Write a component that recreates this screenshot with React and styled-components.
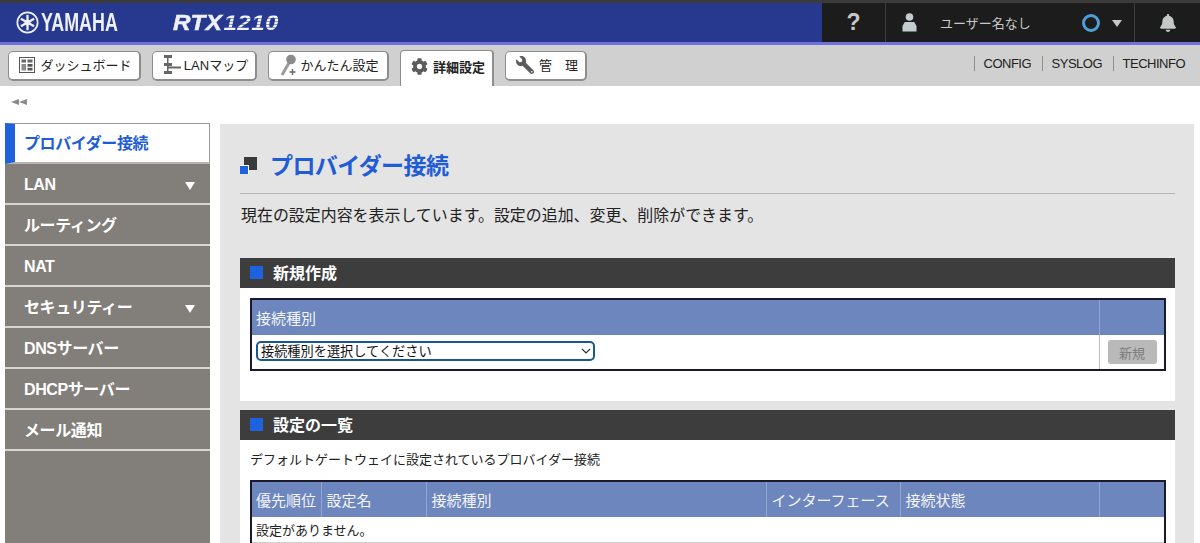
import React from 'react'
import styled, { createGlobalStyle } from 'styled-components'
import { FaBell, FaCog, FaWrench } from 'react-icons/fa'

const JP = `"Liberation Sans", "Noto Sans CJK JP", sans-serif`

const Global = createGlobalStyle`
html, body {
  margin: 0;
  padding: 0;
  height: 543px;
  overflow: hidden;
  background: #fff;
  font-family: ${JP};
  color: #1c1c1c;
}
`
const Page = styled.div`
width: 1200px;
height: 543px;
overflow: hidden;
display: flex;
flex-direction: column;
`
const TopBar = styled.header`
height: 39px;
flex: none;
display: flex;
justify-content: space-between;
background: #27398f;
border-top: 3px solid #3b3b3b;
border-bottom: 3px solid #7071dc;
`
const Brand = styled.div`
display: flex;
align-items: center;
padding-left: 16px;
color: #eef0f8;
`
const Yamaha = styled.span`
font-family: "Liberation Sans", sans-serif;
font-size: 25px;
font-weight: 700;
margin-left: 2px;
width: 78px;
display: inline-block;
transform: scaleX(.715);
transform-origin: left center;
`
const Model = styled.span`
font-family: "Liberation Sans", sans-serif;
font-size: 22px;
font-weight: 700;
font-style: italic;
margin-left: 54px;
letter-spacing: .4px;
display: inline-block;
transform: scaleX(1.1);
transform-origin: left center;
-webkit-text-stroke: .5px #eef0f8;
`
const ModelNum = styled.span`
margin-left: 1px;
-webkit-text-stroke: 0;
color: transparent;
background: repeating-linear-gradient(180deg, #f2f4fb 0 2px, #8f9bd2 2px 3px);
-webkit-background-clip: text;
background-clip: text;
`
const UserArea = styled.div`
width: 378px;
display: flex;
background: #1c1c1c;
color: #c6c8c8;
`
const HelpCell = styled.div`
width: 63px;
display: flex;
align-items: center;
justify-content: center;
border-right: 1px solid #3e3e3e;
font-size: 23px;
font-weight: 700;
`
const UserCell = styled.div`
width: 249px;
display: flex;
align-items: center;
padding-left: 16px;
box-sizing: border-box;
border-right: 1px solid #3e3e3e;
`
const UserName = styled.span`
font-size: 13px;
margin-left: 23px;
width: 142px;
`
const Status = styled.span`
width: 12px;
height: 12px;
border: 3px solid #4d9fd6;
border-radius: 50%;
`
const Caret = styled.span`
width: 0;
height: 0;
margin-left: ${p => p.$gap || 0}px;
margin-top: 2px;
border-left: 5px solid transparent;
border-right: 5px solid transparent;
border-top: ${p => p.$h || 7}px solid ${p => p.$color};
`
const BellCell = styled.div`
flex: 1;
display: flex;
align-items: center;
justify-content: center;
font-size: 18px;
`
const NavBar = styled.nav`
height: 41px;
flex: none;
display: flex;
justify-content: space-between;
background: #d0d0d0;
box-sizing: border-box;
padding: 5px 15px 0 8px;
`
const Tabs = styled.div`
display: flex;
align-items: flex-start;
gap: 11px;
`
const Tab = styled.div`
display: flex;
align-items: center;
justify-content: center;
gap: ${p => p.$gap || 5}px;
box-sizing: border-box;
width: ${p => p.$w}px;
height: ${p => (p.$active ? 36 : 30)}px;
margin: ${p => (p.$active ? '0' : '1px 0 0')};
padding: ${p => (p.$active ? '0 0 5px 3px' : '0 0 2px 3px')};
background: #fff;
border: 1px solid #8d8d8d;
border-right-width: 2px;
border-bottom: ${p => (p.$active ? '0' : '2px solid #8d8d8d')};
border-radius: ${p => (p.$active ? '4px 4px 0 0' : '5px')};
font-size: 13px;
font-weight: ${p => (p.$active ? 700 : 400)};
color: #222;
white-space: nowrap;
svg { flex: none; color: #5c5c5c; }
`
const FlipWrench = styled(FaWrench)`
transform: scaleX(-1);
`
const Links = styled.div`
display: flex;
align-items: flex-start;
padding-top: 6px;
font-size: 13px;
letter-spacing: -.5px;
color: #222;
`
const NavLink = styled.span`
line-height: 15px;
padding-left: 9px;
margin-left: ${p => (p.$first ? 0 : 10.5)}px;
border-left: 1px solid #8f8f8f;
`
const Body = styled.div`
flex: 1;
min-height: 0;
display: flex;
flex-direction: column;
`
const Collapse = styled.div`
height: 37px;
flex: none;
display: flex;
padding: 13px 0 0 11px;
box-sizing: border-box;
`
const CollapseArrow = styled.span`
width: 0;
height: 0;
border-top: 3.5px solid transparent;
border-bottom: 3.5px solid transparent;
border-right: 8px solid #8a8a8a;
`
const Columns = styled.div`
flex: 1;
display: flex;
align-items: stretch;
padding-left: 5px;
gap: 10px;
`
const Sidebar = styled.aside`
width: 205px;
flex: none;
height: 420px;
background: #827e7a;
`
const MenuActive = styled.div`
height: 41px;
box-sizing: border-box;
display: flex;
align-items: center;
padding: 2px 0 0 9px;
background: #fff;
border: 1px solid #9b9b9b;
border-left: 10px solid #1f62e0;
border-bottom: 2px solid #b8b5b0;
color: #1f5cd6;
font-size: 16px;
line-height: 20px;
letter-spacing: -.4px;
font-weight: 700;
`
const MenuItem = styled.div`
height: 41px;
box-sizing: border-box;
display: flex;
align-items: center;
justify-content: space-between;
padding: 2px 15px 0 19px;
border-bottom: 2px solid #d9d6d1;
color: #fff;
font-size: 16px;
line-height: 20px;
letter-spacing: -.4px;
font-weight: 700;
`
const Main = styled.main`
width: 974px;
flex: none;
margin-top: 1px;
background: #e4e4e4;
box-sizing: border-box;
padding: 0 19px 0 20px;
`
const Title = styled.div`
height: 70px;
box-sizing: border-box;
display: flex;
align-items: center;
padding: 12px 0 0;
border-bottom: 1px solid #b5b5b5;
`
const TitleText = styled.h1`
margin: 0 0 2px 12px;
font-size: 23px;
letter-spacing: -.6px;
font-weight: 700;
color: #1f5cd6;
`
const Lead = styled.p`
margin: 0;
height: 64px;
box-sizing: border-box;
padding: 11px 0 0 1px;
font-size: 15.95px;
line-height: 22px;
color: #222;
`
const SectionHead = styled.h2`
margin: 0;
height: 30px;
box-sizing: border-box;
display: flex;
align-items: center;
padding: 0 0 2px 10px;
gap: 10px;
background: #3d3d3d;
color: #fff;
font-size: 16px;
font-weight: 700;
`
const BlueSquare = styled.span`
width: 13px;
height: 13px;
background: #1f62e0;
`
const Panel = styled.section`
background: #fff;
padding: 10px 10px 30px;
margin-bottom: 9px;
`
const Note = styled.p`
margin: 0;
height: 30px;
line-height: 20px;
font-size: 13px;
color: #222;
`
const Table = styled.table`
width: 914px;
table-layout: fixed;
border-collapse: collapse;
border: 2px solid #1a1a2c;
font-size: 13px;
`
const Th = styled.th`
height: 35px;
padding: 0 0 0 5px;
background: #6d86bd;
border-left: 1px solid #93a6d2;
color: #f3f5fa;
font-size: 15px;
font-weight: 400;
text-align: left;
white-space: nowrap;
&:first-child { border-left: 0; padding-left: 4px; }
`
const Td = styled.td`
height: ${p => p.$h || 34}px;
padding: 0 0 0 4px;
color: #222;
border-left: ${p => (p.$split ? '1px solid #bdbdbd' : '0')};
border-bottom: 1px solid #cfcfcf;
`
const SelectWrap = styled.div`
position: relative;
width: 339px;
margin-top: -2px;
`
const TypeSelect = styled.select`
appearance: none;
display: block;
width: 100%;
height: 20px;
box-sizing: border-box;
padding: 0 0 0 3px;
border: 2px solid #16588f;
border-radius: 5px;
background: #fff;
color: #111;
font-family: ${JP};
font-size: 13.2px;
`
const Chevron = styled.svg`
position: absolute;
right: 4px;
top: 7px;
pointer-events: none;
`
const NewButton = styled.button`
display: block;
width: 49px;
height: 24px;
margin-left: 4px;
padding: 0;
border: 0;
border-radius: 3px;
background: #b9b9b9;
color: #7d7d7d;
font-family: ${JP};
font-size: 13px;
`

const Emblem = () => (
  <svg width="23" height="23" viewBox="0 0 24 24" fill="none" stroke="#eef0f8">
    <circle cx="12" cy="12" r="10.6" strokeWidth="1.8" />
    {[0, 60, 120].map(a => (
      <line key={a} x1="12" y1="4" x2="12" y2="20" strokeWidth="2.4" transform={`rotate(${a} 12 12)`} />
    ))}
    <circle cx="12" cy="12" r="3" fill="#eef0f8" stroke="none" />
  </svg>
)

const UserIcon = () => (
  <svg width="15" height="19" viewBox="0 0 15 19" fill="#c3cccc">
    <circle cx="7.5" cy="4" r="3.8" />
    <path d="M2.8 9h9.4l2.3 4v5.5H.5V13z" />
  </svg>
)

const DashIcon = () => (
  <svg width="16" height="16" viewBox="0 0 16 16">
    <rect x=".5" y=".5" width="15" height="15" fill="#fff" stroke="#555" />
    <rect x="2.5" y="2.5" width="4.5" height="3" fill="#666" />
    <rect x="8.5" y="2.5" width="5" height="3" fill="#666" />
    <rect x="2.5" y="7" width="4.5" height="6.5" fill="#8a8a8a" />
    <rect x="8.5" y="7" width="5" height="2.7" fill="#555" />
    <rect x="8.5" y="10.8" width="5" height="2.7" fill="#555" />
  </svg>
)

const MapIcon = () => (
  <svg width="18" height="19" viewBox="0 0 18 19" fill="#666">
    <rect x="1" y="0" width="8" height="3" />
    <rect x="1" y="8" width="8" height="3" />
    <rect x="1" y="16" width="8" height="3" />
    <rect x="4" y="3" width="1.5" height="13" />
    <rect x="5" y="11.5" width="13" height="2" />
  </svg>
)

const WandIcon = () => (
  <svg width="17" height="22" viewBox="0 0 17 22">
    <path d="M9.5 8L2 21" stroke="#9a9a9a" strokeWidth="3" />
    <circle cx="11" cy="5.5" r="4.8" fill="#8a8a8a" />
    <path d="M12.5 15v6M9.5 18h6" stroke="#666" strokeWidth="1.4" />
  </svg>
)

const TitleIcon = () => (
  <svg width="18" height="18" viewBox="0 0 18 18">
    <rect x="4" y="1" width="13" height="13" fill="#3a3a3a" />
    <rect x="0" y="9" width="9" height="9" fill="#fff" />
    <rect x="0" y="10" width="8" height="8" fill="#1f62e0" />
  </svg>
)

const menu = [
  { label: 'LAN', open: true },
  { label: 'ルーティング' },
  { label: 'NAT' },
  { label: 'セキュリティー', open: true },
  { label: 'DNSサーバー' },
  { label: 'DHCPサーバー' },
  { label: 'メール通知' },
]

const listCols = [
  ['優先順位', 70],
  ['設定名', 105],
  ['接続種別', 340],
  ['インターフェース', 134],
  ['接続状態', 199],
  ['', 66],
]

export default function App() {
  return (
    <Page>
      <Global />
      <TopBar>
        <Brand>
          <Emblem />
          <Yamaha>YAMAHA</Yamaha>
          <Model>RTX<ModelNum>1210</ModelNum></Model>
        </Brand>
        <UserArea>
          <HelpCell>?</HelpCell>
          <UserCell>
            <UserIcon />
            <UserName>ユーザー名なし</UserName>
            <Status />
            <Caret $color="#c6c8c8" $gap={12} />
          </UserCell>
          <BellCell><FaBell /></BellCell>
        </UserArea>
      </TopBar>
      <NavBar>
        <Tabs>
          <Tab $w={133}><DashIcon />ダッシュボード</Tab>
          <Tab $w={105} $gap={3}><MapIcon />LANマップ</Tab>
          <Tab $w={121} $gap={3}><WandIcon />かんたん設定</Tab>
          <Tab $w={94} $active><FaCog size={17} />詳細設定</Tab>
          <Tab $w={82} $gap={5}><FlipWrench size={18} />管　理</Tab>
        </Tabs>
        <Links>
          <NavLink $first>CONFIG</NavLink>
          <NavLink>SYSLOG</NavLink>
          <NavLink>TECHINFO</NavLink>
        </Links>
      </NavBar>
      <Body>
        <Collapse><CollapseArrow /><CollapseArrow /></Collapse>
        <Columns>
          <Sidebar>
            <MenuActive>プロバイダー接続</MenuActive>
            {menu.map(m => (
              <MenuItem key={m.label}>
                {m.label}
                {m.open && <Caret $color="#fff" $h={8} />}
              </MenuItem>
            ))}
          </Sidebar>
          <Main>
            <Title>
              <TitleIcon />
              <TitleText>プロバイダー接続</TitleText>
            </Title>
            <Lead>現在の設定内容を表示しています。設定の追加、変更、削除ができます。</Lead>
            <SectionHead><BlueSquare />新規作成</SectionHead>
            <Panel>
              <Table>
                <colgroup>
                  <col width="848" />
                  <col width="66" />
                </colgroup>
                <thead>
                  <tr><Th>接続種別</Th><Th /></tr>
                </thead>
                <tbody>
                  <tr>
                    <Td>
                      <SelectWrap>
                        <TypeSelect defaultValue="">
                          <option value="">接続種別を選択してください</option>
                        </TypeSelect>
                        <Chevron width="10" height="6" viewBox="0 0 10 6" fill="none" stroke="#333" strokeWidth="1.2">
                          <path d="M1 1l4 4 4-4" />
                        </Chevron>
                      </SelectWrap>
                    </Td>
                    <Td $split><NewButton disabled>新規</NewButton></Td>
                  </tr>
                </tbody>
              </Table>
            </Panel>
            <SectionHead><BlueSquare />設定の一覧</SectionHead>
            <Panel>
              <Note>デフォルトゲートウェイに設定されているプロバイダー接続</Note>
              <Table>
                <colgroup>
                  {listCols.map(([name, w]) => <col key={name} width={w} />)}
                </colgroup>
                <thead>
                  <tr>{listCols.map(([name]) => <Th key={name}>{name}</Th>)}</tr>
                </thead>
                <tbody>
                  <tr><Td colSpan={6} $h={25}>設定がありません。</Td></tr>
                  <tr><Td colSpan={6} $h={25} /></tr>
                </tbody>
              </Table>
            </Panel>
          </Main>
        </Columns>
      </Body>
    </Page>
  )
}
